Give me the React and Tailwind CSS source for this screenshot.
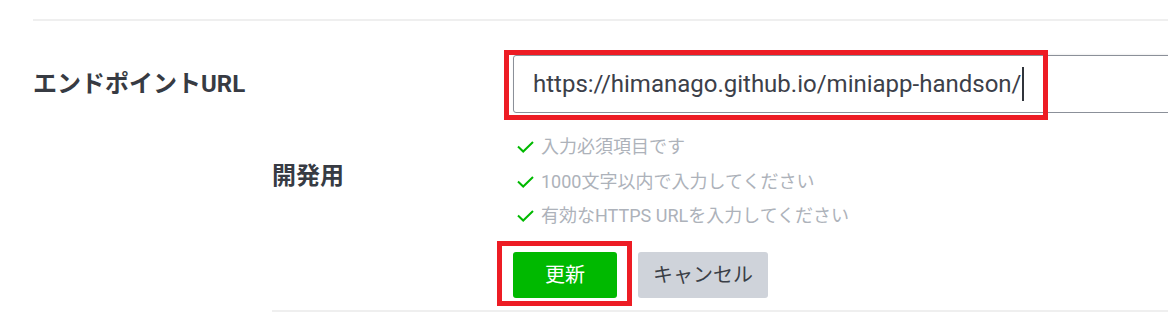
import React from 'react';

const font = { fontFamily: '"Roboto", "Noto Sans CJK JP", sans-serif' };

function Check() {
  return (
    <svg width="17" height="12" viewBox="0 0 17 12" className="shrink-0">
      <path d="M1 5.5 L6.2 10.5 L16 1" fill="none" stroke="#00b900" strokeWidth="2" />
    </svg>
  );
}

const rules = ['入力必須項目です', '1000文字以内で入力してください', '有効なHTTPS URLを入力してください'];

export default function App() {
  return (
    <div className="w-[1168px] h-[320px] overflow-hidden bg-white pl-[33px] pt-[19px]" style={font}>
      <div className="h-[2px] bg-[#efefef]" />

      {/* endpoint row */}
      <div className="flex items-center mt-[34px]">
        <div className="w-[480px] shrink-0 text-[24px] font-bold text-[#373b43] leading-[32px]">エンドポイントURL</div>
        <div className="relative shrink-0">
          <div className="w-[700px] h-[58px] border border-[#8b9099] rounded-[3px] shadow-[0_-1px_2px_rgba(0,0,0,0.06)] flex items-center pl-[19px] text-[24px] text-[#3c4049]">
            <span>https://himanago.github.io/miniapp-handson/</span>
            <span className="w-[2px] h-[34px] bg-[#30343b] ml-[1px]" />
          </div>
          <div className="absolute left-[-9px] top-[-5px] w-[544px] h-[70px] border-[5px] border-[#ed1c24]" />
        </div>
      </div>

      {/* dev sub row */}
      <div className="ml-[239px] flex">
        <div className="w-[241px] shrink-0 pt-[47px] text-[24px] font-bold text-[#373b43] leading-[32px]">開発用</div>
        <div className="pt-[17px]">
          <ul>
            {rules.map((r) => (
              <li key={r} className="flex items-center gap-[7px] pl-[4px] text-[18px] leading-[34.5px] text-[#adb2ba]">
                <Check />
                <span>{r}</span>
              </li>
            ))}
          </ul>
          <div className="flex gap-[21px] mt-[18px] mb-[12px]">
            <div className="relative">
              <button className="w-[104px] h-[46px] rounded-[3px] bg-[#00b900] text-white text-[20px]">更新</button>
              <div className="absolute left-[-16px] top-[-11px] w-[135px] h-[65px] border-[5px] border-[#ed1c24]" />
            </div>
            <button className="w-[130px] h-[46px] rounded-[3px] bg-[#cfd3da] text-[#3a3e46] text-[20px]">キャンセル</button>
          </div>
        </div>
      </div>
      <div className="ml-[239px] h-[2px] bg-[#efefef]" />
    </div>
  );
}
